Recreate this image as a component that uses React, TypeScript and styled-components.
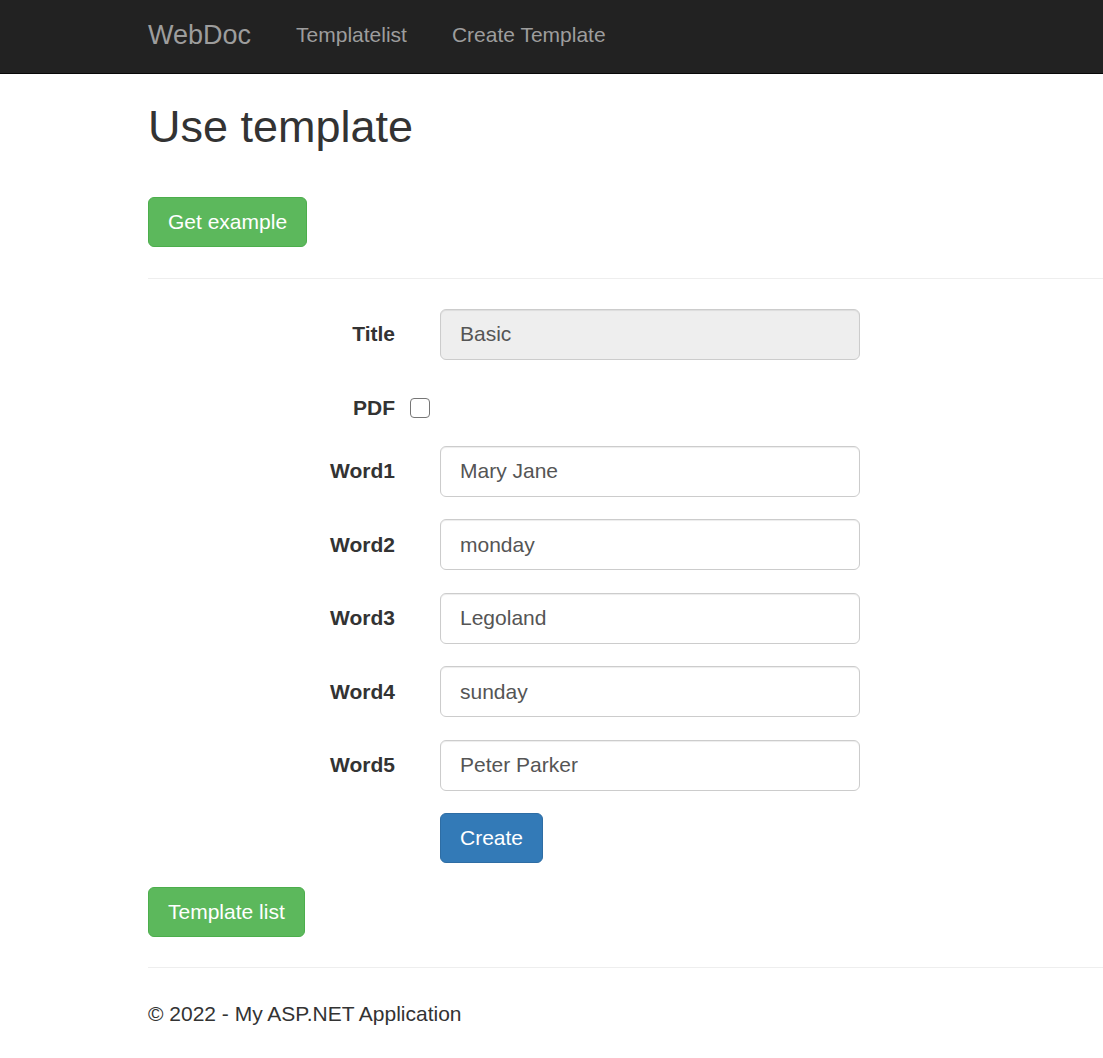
import React, { FC, ReactElement } from 'react'
import styled, { createGlobalStyle } from 'styled-components'

const GlobalStyle = createGlobalStyle`
  html, body {
    margin: 0;
    padding: 0;
    background: #fff;
  }
  body {
    font-family: "Liberation Sans", Arial, Helvetica, sans-serif;
    font-size: 21px;
    line-height: 30px;
    color: #333;
  }
  * {
    box-sizing: border-box;
  }
`

const Navbar = styled.nav`
  height: 74px;
  background: #222;
  border-bottom: 1px solid #080808;
  display: flex;
  align-items: center;
  padding-left: 148px;
`

const Brand = styled.a`
  font-size: 27px;
  color: #9d9d9d;
  text-decoration: none;
  margin-right: 45px;
  margin-top: -3px;
`

const NavLinks = styled.div`
  display: flex;
  gap: 45px;
  margin-top: -3px;
`

const NavLink = styled.a`
  font-size: 21px;
  color: #9d9d9d;
  text-decoration: none;
`

const Container = styled.main`
  padding-left: 148px;
`

const Heading = styled.h2`
  font-size: 45px;
  font-weight: 500;
  line-height: 1.1;
  margin: 28px 0 45px;
`

const Button = styled.button<{ $variant: 'success' | 'primary' }>`
  height: 50px;
  padding: 0 19px;
  border-radius: 6px;
  font-family: inherit;
  font-size: 21px;
  color: #fff;
  cursor: pointer;
  background: ${p => (p.$variant === 'success' ? '#5cb85c' : '#337ab7')};
  border: 1px solid ${p => (p.$variant === 'success' ? '#4cae4c' : '#2e6da4')};
`

const Divider = styled.hr<{ $top: number; $bottom: number }>`
  border: 0;
  border-top: 1px solid #eee;
  margin: ${p => p.$top}px 0 ${p => p.$bottom}px;
`

const Form = styled.form`
  display: flex;
  flex-direction: column;
  margin-bottom: 24px;
`

const Row = styled.div<{ $gap: number; $spacing: number; $pad?: number }>`
  display: grid;
  grid-template-columns: 247px auto;
  column-gap: ${p => p.$gap}px;
  align-items: center;
  margin-bottom: ${p => p.$spacing}px;
  padding-top: ${p => p.$pad || 0}px;
`

const Label = styled.label`
  font-weight: bold;
  text-align: right;
  line-height: 30px;
`

const Input = styled.input`
  width: 420px;
  height: 51px;
  padding: 0 19px;
  font-family: inherit;
  font-size: 21px;
  color: #555;
  background: #fff;
  border: 1px solid #ccc;
  border-radius: 6px;
  box-shadow: inset 0 1px 1px rgba(0, 0, 0, 0.075);
  outline: none;

  &:disabled {
    background: #eee;
    color: #555;
    opacity: 1;
  }
`

const Checkbox = styled.input`
  appearance: none;
  width: 20px;
  height: 20px;
  margin: 0;
  border: 1.5px solid #767676;
  border-radius: 4px;
  background: #fff;
  justify-self: start;
`

const Footer = styled.footer`
  padding-bottom: 20px;
`

const words = [
    { id: 'Word1', value: 'Mary Jane' },
    { id: 'Word2', value: 'monday' },
    { id: 'Word3', value: 'Legoland' },
    { id: 'Word4', value: 'sunday' },
    { id: 'Word5', value: 'Peter Parker' },
]

const App: FC = (): ReactElement => {
    return (
        <>
            <GlobalStyle />
            <Navbar>
                <Brand href="#">WebDoc</Brand>
                <NavLinks>
                    <NavLink href="#">Templatelist</NavLink>
                    <NavLink href="#">Create Template</NavLink>
                </NavLinks>
            </Navbar>
            <Container>
                <Heading>Use template</Heading>
                <Button type="button" $variant="success">Get example</Button>
                <Divider $top={31} $bottom={30} />
                <Form onSubmit={e => e.preventDefault()}>
                    <Row $gap={45} $spacing={22}>
                        <Label htmlFor="Title">Title</Label>
                        <Input id="Title" defaultValue="Basic" disabled />
                    </Row>
                    <Row $gap={15} $spacing={23} $pad={11}>
                        <Label htmlFor="PDF">PDF</Label>
                        <Checkbox id="PDF" type="checkbox" />
                    </Row>
                    {words.map(w => (
                        <Row key={w.id} $gap={45} $spacing={22.5}>
                            <Label htmlFor={w.id}>{w.id}</Label>
                            <Input id={w.id} defaultValue={w.value} />
                        </Row>
                    ))}
                    <Row $gap={45} $spacing={0}>
                        <span />
                        <div>
                            <Button type="submit" $variant="primary">Create</Button>
                        </div>
                    </Row>
                </Form>
                <Button type="button" $variant="success">Template list</Button>
                <Divider $top={30} $bottom={31} />
                <Footer>© 2022 - My ASP.NET Application</Footer>
            </Container>
        </>
    )
}

export default App
